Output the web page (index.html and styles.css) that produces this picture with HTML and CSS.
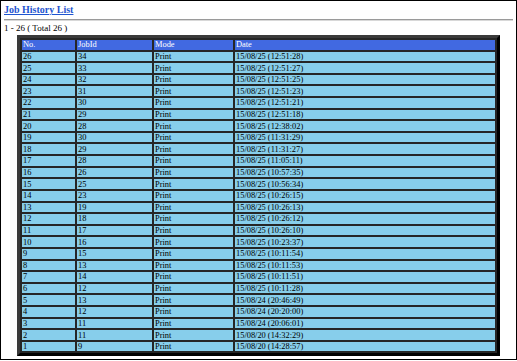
FILE: index.html
```html
<!DOCTYPE html>
<html>
<head>
<meta charset="utf-8">
<link rel="stylesheet" href="styles.css">
</head>
<body>
<div class="frame">
  <h1 class="title"><a href="#">Job History List</a></h1>
  <div class="rule"></div>
  <div class="count">1 - 26 ( Total 26 )</div>
  <table class="jobs">
    <thead>
      <tr><th class="c-no">No.</th><th class="c-id">JobId</th><th class="c-mode">Mode</th><th class="c-date">Date</th></tr>
    </thead>
    <tbody>
      <tr><td>26</td><td>34</td><td>Print</td><td>15/08/25 (12:51:28)</td></tr>
      <tr><td>25</td><td>33</td><td>Print</td><td>15/08/25 (12:51:27)</td></tr>
      <tr><td>24</td><td>32</td><td>Print</td><td>15/08/25 (12:51:25)</td></tr>
      <tr><td>23</td><td>31</td><td>Print</td><td>15/08/25 (12:51:23)</td></tr>
      <tr><td>22</td><td>30</td><td>Print</td><td>15/08/25 (12:51:21)</td></tr>
      <tr><td>21</td><td>29</td><td>Print</td><td>15/08/25 (12:51:18)</td></tr>
      <tr><td>20</td><td>28</td><td>Print</td><td>15/08/25 (12:38:02)</td></tr>
      <tr><td>19</td><td>30</td><td>Print</td><td>15/08/25 (11:31:29)</td></tr>
      <tr><td>18</td><td>29</td><td>Print</td><td>15/08/25 (11:31:27)</td></tr>
      <tr><td>17</td><td>28</td><td>Print</td><td>15/08/25 (11:05:11)</td></tr>
      <tr><td>16</td><td>26</td><td>Print</td><td>15/08/25 (10:57:35)</td></tr>
      <tr><td>15</td><td>25</td><td>Print</td><td>15/08/25 (10:56:34)</td></tr>
      <tr><td>14</td><td>23</td><td>Print</td><td>15/08/25 (10:26:15)</td></tr>
      <tr><td>13</td><td>19</td><td>Print</td><td>15/08/25 (10:26:13)</td></tr>
      <tr><td>12</td><td>18</td><td>Print</td><td>15/08/25 (10:26:12)</td></tr>
      <tr><td>11</td><td>17</td><td>Print</td><td>15/08/25 (10:26:10)</td></tr>
      <tr><td>10</td><td>16</td><td>Print</td><td>15/08/25 (10:23:37)</td></tr>
      <tr><td>9</td><td>15</td><td>Print</td><td>15/08/25 (10:11:54)</td></tr>
      <tr><td>8</td><td>13</td><td>Print</td><td>15/08/25 (10:11:53)</td></tr>
      <tr><td>7</td><td>14</td><td>Print</td><td>15/08/25 (10:11:51)</td></tr>
      <tr><td>6</td><td>12</td><td>Print</td><td>15/08/25 (10:11:28)</td></tr>
      <tr><td>5</td><td>13</td><td>Print</td><td>15/08/24 (20:46:49)</td></tr>
      <tr><td>4</td><td>12</td><td>Print</td><td>15/08/24 (20:20:00)</td></tr>
      <tr><td>3</td><td>11</td><td>Print</td><td>15/08/24 (20:06:01)</td></tr>
      <tr><td>2</td><td>11</td><td>Print</td><td>15/08/20 (14:32:29)</td></tr>
      <tr><td>1</td><td>9</td><td>Print</td><td>15/08/20 (14:28:57)</td></tr>
    </tbody>
  </table>
</div>
</body>
</html>
```
FILE: styles.css
```css
html, body {
  margin: 0;
  padding: 0;
  background: #fff;
}
.frame {
  box-sizing: border-box;
  width: 517px;
  height: 360px;
  border: 1px solid #000;
  padding: 3px 3px 0 3px;
  font-family: "Liberation Serif", "Times New Roman", serif;
  color: #000;
}
.title {
  margin: 0;
  font-size: 10px;
  line-height: 12px;
  font-weight: bold;
}
.title a {
  color: #1f55d0;
  text-decoration: underline;
}
.rule {
  margin-top: 3px;
  height: 0;
  border-top: 1px solid #9a9a9a;
  border-bottom: 1px solid #d8d8d8;
}
.count {
  margin-top: 2px;
  font-size: 9px;
  line-height: 11px;
}
.jobs {
  margin: 1px 0 0 13px;
  width: 483px;
  border-collapse: separate;
  border-spacing: 2px;
  border: 3px outset #3a3a3a;
  background: #262626;
  font-size: 8.4px;
}
.jobs th, .jobs td {
  height: 9.62px;
  padding: 0 1px;
  line-height: 9px;
  text-align: left;
  vertical-align: middle;
  font-weight: normal;
  white-space: nowrap;
}
.jobs th {
  background: #4169e1;
  color: #fff;
}
.jobs td {
  background: #87ceeb;
  color: #000;
}
.c-no { width: 51px; }
.c-id { width: 73px; }
.c-mode { width: 77px; }
.c-date { width: 258px; }
```
